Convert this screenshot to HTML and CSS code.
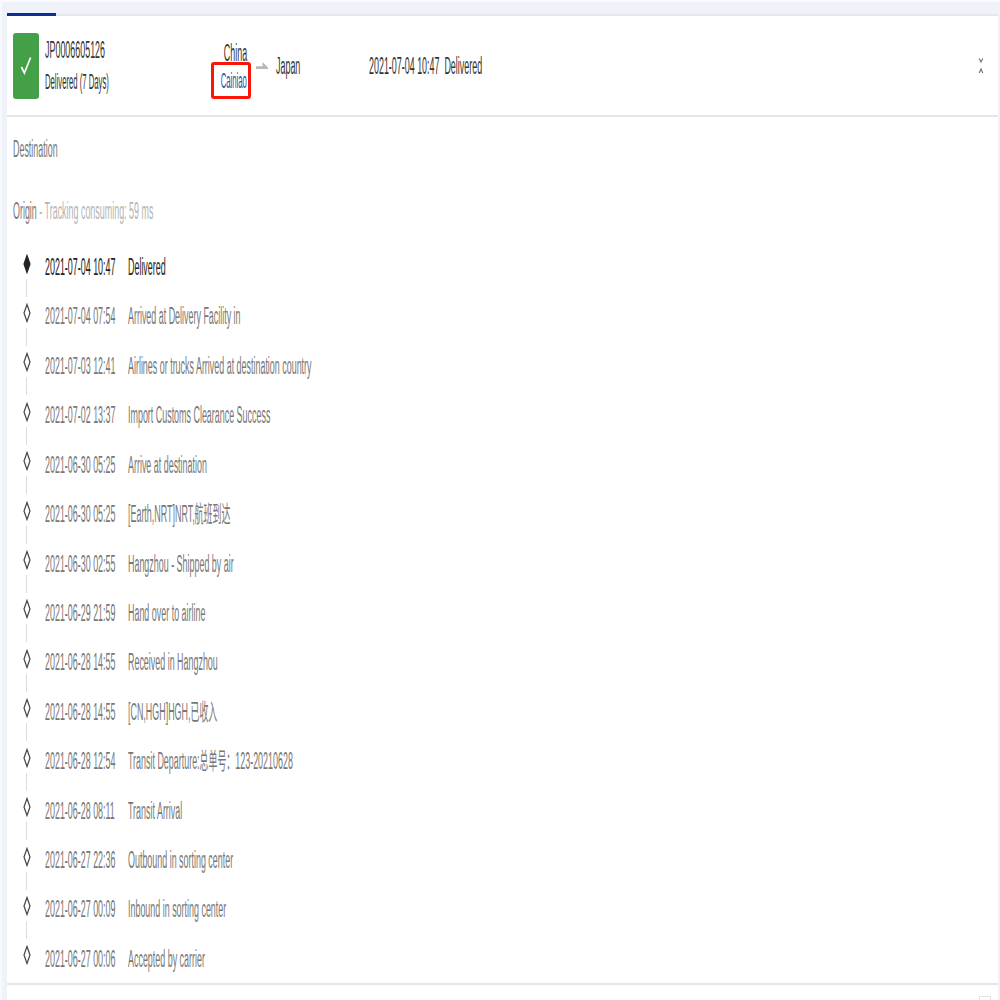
FILE: index.html
```
<!DOCTYPE html>
<html lang="en">
<head>
    <meta charset="UTF-8">
    <title>Tracking JP0006605126</title>
    <link rel="stylesheet" href="styles.css">
</head>
<body>
<div class="tabs"><div class="tab-active"></div></div>
<div class="card">
    <div class="header">
        <div class="status">
            <svg width="26" height="66" viewBox="0 0 26 66"><path d="M8.4 34L11.4 40L17.6 24.5" fill="none" stroke="#fff" stroke-width="1.7"/></svg>
        </div>
        <div class="parcel">
            <div><span class="text">JP0006605126</span></div>
            <div class="state"><span class="text">Delivered (7 Days)</span></div>
        </div>
        <div class="from">
            <div><span class="text">China</span></div>
            <div class="carrier"><span class="text">Cainiao</span></div>
        </div>
        <svg class="arrow" width="12" height="10" viewBox="0 0 12 10"><path d="M0 5.2H6.5V1L12 6.4V8H0z" fill="#b8b8b8"/></svg>
        <div class="to"><span class="text">Japan</span></div>
        <div class="latest"><span class="text">2021-07-04 10:47&nbsp; Delivered</span></div>
        <svg class="toggle" width="6" height="18" viewBox="0 0 6 18"><path d="M1.2 1.5L3 5L4.8 1.5M1.2 16L3 12L4.8 16" fill="none" stroke="#777" stroke-width="1.2"/></svg>
    </div>
    <div class="details">
        <div class="place"><span class="text">Destination</span></div>
        <div class="place origin"><span class="text">Origin <span class="note">- Tracking consuming: 59 ms</span></span></div>
        <div class="events" id="events"></div>
    </div>
    <div class="footer"><div class="footer-button"></div></div>
</div>
<script>
    const events = [
        ['2021-07-04 10:47', 'Delivered'],
        ['2021-07-04 07:54', 'Arrived at Delivery Facility in'],
        ['2021-07-03 12:41', 'Airlines or trucks Arrived at destination country'],
        ['2021-07-02 13:37', 'Import Customs Clearance Success'],
        ['2021-06-30 05:25', 'Arrive at destination'],
        ['2021-06-30 05:25', '[Earth,NRT]NRT,航班到达'],
        ['2021-06-30 02:55', 'Hangzhou - Shipped by air'],
        ['2021-06-29 21:59', 'Hand over to airline'],
        ['2021-06-28 14:55', 'Received in Hangzhou'],
        ['2021-06-28 14:55', '[CN,HGH]HGH,已收入'],
        ['2021-06-28 12:54', 'Transit Departure:总单号：123-20210628'],
        ['2021-06-28 08:11', 'Transit Arrival'],
        ['2021-06-27 22:36', 'Outbound in sorting center'],
        ['2021-06-27 00:09', 'Inbound in sorting center'],
        ['2021-06-27 00:06', 'Accepted by carrier']
    ];

    document.getElementById('events').innerHTML = events.map(([time, text]) => `
        <div class="event">
            <div class="marker">
                <svg width="8" height="20" viewBox="0 0 8 20"><path d="M4 1.5L7 10L4 18.5L1 10z"/></svg>
                <div class="line"></div>
            </div>
            <div class="time"><span class="text">${time}</span></div>
            <div><span class="text">${text}</span></div>
        </div>`).join('');
</script>
</body>
</html>
```
FILE: styles.css
```
* {
    box-sizing: border-box;
}

body {
    margin: 0;
    height: 1000px;
    overflow: hidden;
    background: #f0f2f9;
    border-top: 2px solid #fafbff;
    border-left: 2px solid #f8f9fd;
    font-family: "Liberation Sans", "Noto Sans CJK SC", sans-serif;
    font-size: 23px;
    line-height: 32px;
    color: #333;
}

/* condensed text */
.text {
    display: inline-block;
    white-space: nowrap;
    transform: scaleX(0.388);
    transform-origin: 0 50%;
}

.tabs {
    height: 14px;
    margin: 0 2px 0 5px;
    padding-top: 11px;
    border-bottom: 2px solid #e6e7eb;
}

.tab-active {
    width: 49px;
    height: 3px;
    background: #0b2f96;
}

.card {
    height: 984px;
    margin: 0 2px 0 5px;
    background: #fff;
}

.header {
    display: flex;
    align-items: center;
    height: 101px;
    padding-left: 6px;
    border-bottom: 2px solid #e6e6e8;
}

.status {
    width: 26px;
    height: 66px;
    background: #43a047;
    border-radius: 3px;
}

.status svg {
    display: block;
}

.parcel {
    width: 172px;
    padding-left: 6px;
}

.parcel div {
    width: 160px;
    height: 32px;
}

.parcel .state {
    font-size: 21.5px;
}

.state .text {
    transform: scaleX(0.359);
}

.from {
    width: 40px;
    height: 64px;
    margin-top: 1px;
    text-align: right;
}

.from div {
    display: flex;
    justify-content: flex-end;
    height: 28px;
    padding-right: 4px;
    line-height: 38px;
}

.from .text {
    transform-origin: 100% 50%;
}

.from .carrier {
    height: 37px;
    border: 3px solid #fb1508;
    border-radius: 3px;
    padding-right: 1px;
    font-size: 21.5px;
    line-height: 32px;
    color: #2750a8;
}

.carrier .text {
    transform: scaleX(0.36);
}

.arrow {
    margin: 0 8px 0 5px;
}

.to {
    width: 93px;
}

.latest {
    width: 609px;
}

.details {
    height: 866px;
    padding: 16px 0 0 6px;
}

.place {
    height: 32px;
    color: #777;
}

.origin {
    margin-top: 30px;
}

.note {
    color: #b5b5b5;
}

.events {
    margin-top: 24px;
}

.event {
    display: flex;
    height: 49.43px;
    color: #777;
}

.event:first-child {
    color: #222;
}

.marker {
    display: flex;
    flex-direction: column;
    align-items: center;
    width: 27px;
    margin-right: 5px;
    padding-top: 2.5px;
}

.marker path {
    fill: none;
    stroke: #444;
    stroke-width: 1.2;
}

.event:first-child path {
    fill: #222;
    stroke: #222;
}

.line {
    width: 1px;
    height: 18px;
    margin-top: 5px;
    background: #ddd;
}

.event:last-child .line {
    display: none;
}

.time {
    width: 83px;
}

.footer {
    height: 17px;
    padding: 11px 7px 0 0;
    border-top: 2px solid #e6e6e8;
}

.footer-button {
    width: 12px;
    height: 6px;
    margin-left: auto;
    border: 1px solid #e2e2e2;
}
```
